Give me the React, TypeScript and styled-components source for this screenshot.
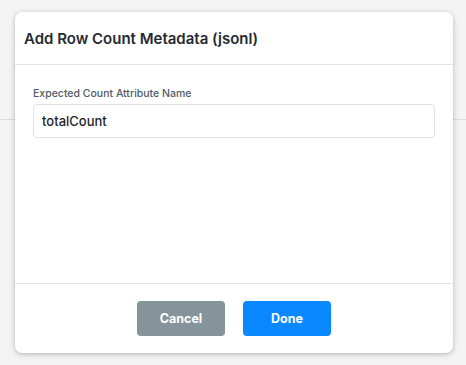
import * as React from "react";
import styled, { createGlobalStyle } from "styled-components";

const GlobalStyle = createGlobalStyle`
  html, body {
    margin: 0;
    padding: 0;
    background: #f4f4f5;
    font-family: Inter, "Noto Sans", sans-serif;
  }
`;

const Page = styled.div`
  position: relative;
  width: 466px;
  height: 365px;
  overflow: hidden;
  background: #f4f4f5;
`;

const PageHeader = styled.div`
  height: 119px;
  border-bottom: 1px solid #dcdcdf;
`;

const Modal = styled.div`
  position: absolute;
  left: 15px;
  top: 12px;
  width: 438px;
  height: 341px;
  display: flex;
  flex-direction: column;
  background: #ffffff;
  border-radius: 7px;
  box-shadow: 0 1px 4px rgba(0, 0, 0, 0.22), 0 2px 12px rgba(0, 0, 0, 0.06);
  overflow: hidden;
`;

const ModalHeader = styled.div`
  height: 52px;
  flex-shrink: 0;
  display: flex;
  align-items: center;
  padding: 0 9px;
  border-bottom: 1px solid #e3e5e7;
`;

const Title = styled.h2`
  margin: 0;
  font-size: 15px;
  font-weight: 600;
  color: #252a31;
`;

const ModalBody = styled.div`
  flex: 1;
  padding: 22px 18px 0;
`;

const Label = styled.label`
  display: block;
  font-size: 10.5px;
  font-weight: 500;
  color: #4f5a63;
  margin-bottom: 4px;
`;

const Input = styled.input`
  box-sizing: border-box;
  width: 100%;
  height: 34px;
  padding: 0 8px;
  border: 1px solid #dfe2e5;
  border-radius: 4px;
  font-family: inherit;
  font-size: 13px;
  font-weight: 500;
  color: #1f242a;
  outline: none;
`;

const ModalFooter = styled.div`
  height: 69px;
  flex-shrink: 0;
  display: flex;
  align-items: center;
  justify-content: center;
  gap: 18px;
  border-top: 1px solid #e3e5e7;
`;

const Button = styled.button<{ primary?: boolean }>`
  width: 88px;
  height: 35px;
  border: none;
  border-radius: 4px;
  background: ${(props) => (props.primary ? "#0a88ff" : "#85939a")};
  color: #ffffff;
  font-family: inherit;
  font-size: 12.5px;
  font-weight: 700;
  cursor: pointer;
`;

export default function App(): React.ReactElement {
  return (
    <Page>
      <GlobalStyle />
      <PageHeader />
      <Modal>
        <ModalHeader>
          <Title>Add Row Count Metadata (jsonl)</Title>
        </ModalHeader>
        <ModalBody>
          <Label>Expected Count Attribute Name</Label>
          <Input defaultValue="totalCount" />
        </ModalBody>
        <ModalFooter>
          <Button>Cancel</Button>
          <Button primary>Done</Button>
        </ModalFooter>
      </Modal>
    </Page>
  );
}
